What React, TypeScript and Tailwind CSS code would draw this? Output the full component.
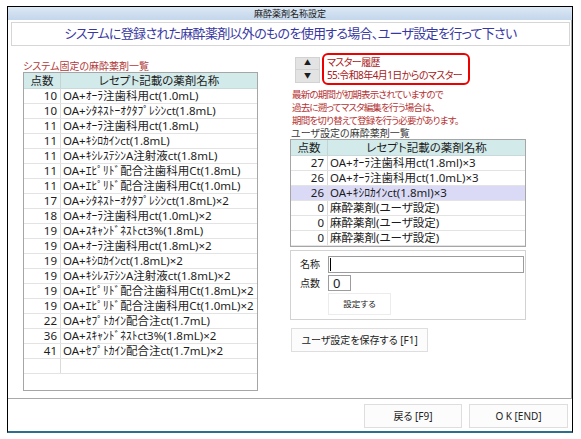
import React from "react";

type Row = { pts: number; name: string; hl?: boolean };

const systemRows: Row[] = [
  { pts: 10, name: "OA+ｵｰﾗ注歯科用ct(1.0mL)" },
  { pts: 10, name: "OA+ｼﾀﾈｽﾄｰｵｸﾀﾌﾟﾚｼﾝct(1.8mL)" },
  { pts: 11, name: "OA+ｵｰﾗ注歯科用ct(1.8mL)" },
  { pts: 11, name: "OA+ｷｼﾛｶｲﾝct(1.8mL)" },
  { pts: 11, name: "OA+ｷｼﾚｽﾃｼﾝA注射液ct(1.8mL)" },
  { pts: 11, name: "OA+ｴﾋﾟﾘﾄﾞ配合注歯科用Ct(1.8mL)" },
  { pts: 11, name: "OA+ｴﾋﾟﾘﾄﾞ配合注歯科用Ct(1.0mL)" },
  { pts: 17, name: "OA+ｼﾀﾈｽﾄｰｵｸﾀﾌﾟﾚｼﾝct(1.8mL)×2" },
  { pts: 18, name: "OA+ｵｰﾗ注歯科用ct(1.0mL)×2" },
  { pts: 19, name: "OA+ｽｷｬﾝﾄﾞﾈｽﾄct3%(1.8mL)" },
  { pts: 19, name: "OA+ｵｰﾗ注歯科用ct(1.8mL)×2" },
  { pts: 19, name: "OA+ｷｼﾛｶｲﾝct(1.8mL)×2" },
  { pts: 19, name: "OA+ｷｼﾚｽﾃｼﾝA注射液ct(1.8mL)×2" },
  { pts: 19, name: "OA+ｴﾋﾟﾘﾄﾞ配合注歯科用Ct(1.8mL)×2" },
  { pts: 19, name: "OA+ｴﾋﾟﾘﾄﾞ配合注歯科用Ct(1.0mL)×2" },
  { pts: 22, name: "OA+ｾﾌﾟﾄｶｲﾝ配合注ct(1.7mL)" },
  { pts: 36, name: "OA+ｽｷｬﾝﾄﾞﾈｽﾄct3%(1.8mL)×2" },
  { pts: 41, name: "OA+ｾﾌﾟﾄｶｲﾝ配合注ct(1.7mL)×2" },
];

const userRows: Row[] = [
  { pts: 27, name: "OA+ｵｰﾗ注歯科用ct(1.8ml)×3" },
  { pts: 26, name: "OA+ｵｰﾗ注歯科用ct(1.0mL)×3" },
  { pts: 26, name: "OA+ｷｼﾛｶｲﾝct(1.8ml)×3", hl: true },
  { pts: 0, name: "麻酔薬剤(ユーザ設定)" },
  { pts: 0, name: "麻酔薬剤(ユーザ設定)" },
  { pts: 0, name: "麻酔薬剤(ユーザ設定)" },
];

const HeadRow = () => (
  <div className="flex h-[16px] border-b border-[#c9d9d9] bg-[#d2eaea] leading-[16px]">
    <div className="w-[37px] shrink-0 border-r border-[#c4d4d4] text-center">点数</div>
    <div className="flex-1 text-center">レセプト記載の薬剤名称</div>
  </div>
);

const BodyRow = ({ row }: { row?: Row }) => (
  <div className={`flex h-[15px] border-b border-[#e3e3e3] leading-[14px] ${row?.hl ? "bg-[#dadaf6]" : ""}`}>
    <div className="w-[37px] shrink-0 border-r border-[#dadada] pr-[3px] text-right">{row ? row.pts : ""}</div>
    <div className="flex-1 overflow-hidden whitespace-nowrap pl-[2px]">{row ? row.name : ""}</div>
  </div>
);

const PlainButton = ({ label, className }: { label: string; className: string }) => (
  <div className={`flex items-center justify-center border border-[#dedede] bg-[#fcfcfc] text-[#222] ${className}`}>{label}</div>
);

export default function App() {
  return (
    <div className="h-[439px] w-[581px] bg-white pl-[7px] pt-[6px] font-['Noto_Sans','Noto_Sans_CJK_JP',sans-serif] text-[#1c1c1c] [font-feature-settings:'palt']">
      <div className="flex h-[427px] w-[566px] flex-col border border-black border-b-2 border-b-[#2d6e8d]">
        <div className="h-[13px] bg-gradient-to-b from-[#dce8f5] to-[#c3d6eb] text-center text-[9px] leading-[13px] text-[#222]">麻酔薬剤名称設定</div>

        <div className="flex h-[379px] flex-col border-b border-r border-[#a9a9a9]">
          <div className="ml-[3px] mr-[1px] mt-[2px] flex h-[24px] items-center justify-center border border-[#d6d6d6] text-[13px] tracking-[-0.7px] text-[#3838a2]">
            システムに登録された麻酔薬剤以外のものを使用する場合、ユーザ設定を行って下さい
          </div>

          <div className="flex">
            {/* left: system list */}
            <div className="ml-[15px] mt-[14px] w-[235px]">
              <div className="h-[12px] text-[10px] leading-[12px] text-[#b23a3a]">システム固定の麻酔薬剤一覧</div>
              <div className="h-[319px] border border-[#a6a6a6] text-[11.5px]">
                <HeadRow />
                {systemRows.map((r, i) => (
                  <BodyRow key={i} row={r} />
                ))}
                <BodyRow />
              </div>
            </div>

            {/* right: user settings */}
            <div className="ml-[32px] mt-[7px] w-[236px]">
              <div className="flex h-[32px]">
                <div className="ml-[5px] mt-[4px] flex w-[25px] flex-col">
                  <div className="flex h-[13px] items-center justify-center border border-[#d2d2d2] bg-[#e3e3e3] text-[7px]">▲</div>
                  <div className="flex h-[13px] items-center justify-center border border-t-0 border-[#d2d2d2] bg-[#e3e3e3] text-[7px]">▼</div>
                </div>
                <div className="ml-[2px] h-[32px] w-[148px] overflow-hidden whitespace-nowrap rounded-[6px] border-2 border-[#ec0000] pl-[3px] text-[10px] leading-[13px] tracking-[-0.6px] text-[#a82020]">
                  <div className="mt-[1px]">マスター履歴</div>
                  <div>55:令和8年4月1日からのマスター</div>
                </div>
              </div>

              <div className="ml-[2px] mt-[3px] text-[9.5px] leading-[13px] tracking-[-0.8px] text-[#b53434]">
                <div>最新の期間が初期表示されていますので</div>
                <div>過去に遡ってマスタ編集を行う場合は、</div>
                <div>期間を切り替えて登録を行う必要があります。</div>
              </div>

              <div className="ml-[1px] h-[12px] text-[10px] leading-[12px] text-[#3a3a3a]">ユーザ設定の麻酔薬剤一覧</div>
              <div className="border border-[#a6a6a6] text-[11.5px]">
                <HeadRow />
                {userRows.map((r, i) => (
                  <BodyRow key={i} row={r} />
                ))}
              </div>

              <div className="mt-[3px] h-[70px] border border-[#d2d2d2] pt-[5px] text-[10px]">
                <div className="flex items-center">
                  <div className="ml-[9px] w-[20px] leading-[17px]">名称</div>
                  <div className="ml-[8px] flex h-[17px] w-[196px] items-center border border-[#9c9c9c] bg-white">
                    <div className="ml-[1px] h-[13px] w-[1px] bg-black" />
                  </div>
                </div>
                <div className="mt-[2px] flex items-center">
                  <div className="ml-[9px] w-[20px] leading-[16px]">点数</div>
                  <div className="ml-[8px] h-[16px] w-[23px] border border-[#9c9c9c] pl-[4px] text-[13px] leading-[14px]">0</div>
                </div>
                <PlainButton label="設定する" className="ml-[37px] mt-[2px] h-[22px] w-[63px] border-[#ececec] bg-white text-[8.5px]" />
              </div>

              <PlainButton label="ユーザ設定を保存する [F1]" className="ml-[1px] mt-[8px] h-[24px] w-[137px] text-[10px]" />
            </div>
          </div>
        </div>

        <div className="flex flex-1 items-start justify-end gap-[7px] pr-[4px] pt-[5px] text-[10px]">
          <PlainButton label="戻る [F9]" className="h-[24px] w-[98px]" />
          <PlainButton label="O K [END]" className="h-[24px] w-[99px]" />
        </div>
      </div>
    </div>
  );
}
